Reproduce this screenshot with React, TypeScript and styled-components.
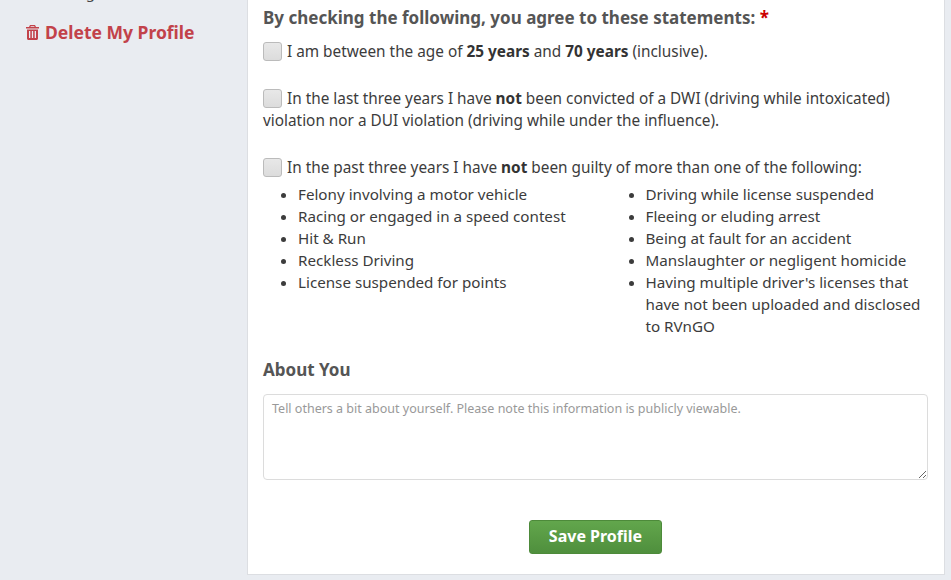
import { FC } from 'react';
import styled, { createGlobalStyle } from 'styled-components';

const GlobalStyle = createGlobalStyle`
	html, body {
		margin: 0;
		padding: 0;
		height: 580px;
		overflow: hidden;
		background-color: #e9ecf1;
		font-family: "Noto Sans", "Open Sans", "Liberation Sans", sans-serif;
		color: #333;
	}
`;

const leftItems = [
	'Felony involving a motor vehicle',
	'Racing or engaged in a speed contest',
	'Hit & Run',
	'Reckless Driving',
	'License suspended for points',
];

const rightItems = [
	'Driving while license suspended',
	'Fleeing or eluding arrest',
	'Being at fault for an accident',
	'Manslaughter or negligent homicide',
	"Having multiple driver's licenses that have not been uploaded and disclosed to RVnGO",
];

const TrashIcon: FC = () => (
	<svg width="13" height="15" viewBox="0 0 13 15" aria-hidden="true">
		<path
			fill="currentColor"
			fillRule="evenodd"
			d="M4 0h5l1 2h3v1.500H0V2h3zM4.800 1.200 4.400 2h4.200l-.4-.8zM1 4.500h11v9c0 .8-.7 1.500-1.500 1.500h-8C1.700 15 1 14.300 1 13.500zM3 6v7h1.300V6zM5.850 6v7h1.300V6zM8.700 6v7H10V6z"
		/>
	</svg>
);

const App: FC = () => (
	<>
		<GlobalStyle />
		<Page>
			<Sidebar>
				<SideLink>Settings</SideLink>
				<DeleteLink>
					<TrashIcon />
					Delete My Profile
				</DeleteLink>
			</Sidebar>
			<Panel>
				<Heading>
					By checking the following, you agree to these statements: <Required>*</Required>
				</Heading>
				<Statement>
					<Check /> I am between the age of <b>25 years</b> and <b>70 years</b> (inclusive).
				</Statement>
				<Statement>
					<Check /> In the last three years I have <b>not</b> been convicted of a DWI (driving while intoxicated) violation nor a DUI violation (driving while under the influence).
				</Statement>
				<Statement $tight>
					<Check /> In the past three years I have <b>not</b> been guilty of more than one of the following:
				</Statement>
				<Columns>
					<BulletList>
						{leftItems.map((item) => <li key={item}>{item}</li>)}
					</BulletList>
					<BulletList>
						{rightItems.map((item) => <li key={item}>{item}</li>)}
					</BulletList>
				</Columns>
				<SubHeading>About You</SubHeading>
				<AboutInput placeholder="Tell others a bit about yourself. Please note this information is publicly viewable." />
				<Actions>
					<SaveButton>Save Profile</SaveButton>
				</Actions>
			</Panel>
		</Page>
	</>
);

export default App;

const Page = styled.div`
	display: flex;
	align-items: flex-start;
	width: 951px;
	height: 580px;
	overflow: hidden;
`;

const Sidebar = styled.aside`
	width: 247px;
	flex-shrink: 0;
	display: flex;
	flex-direction: column;
	margin-top: -19px;
	padding-left: 26px;
	box-sizing: border-box;
`;

const SideLink = styled.div`
	padding-left: 19px;
	font-size: 15px;
	line-height: 22px;
	color: #444;
`;

const DeleteLink = styled.a`
	display: flex;
	align-items: center;
	gap: 6px;
	margin-top: 17px;
	font-size: 17.5px;
	line-height: 24px;
	font-weight: 700;
	color: #c2424a;
`;

const Panel = styled.main`
	width: 698px;
	height: 575px;
	box-sizing: border-box;
	padding: 7px 16px 0 15px;
	background-color: #fff;
	border: 1px solid #dcdee2;
	border-top: none;
	font-size: 15px;
	line-height: 22px;
	color: #3c3c3c;
`;

const Heading = styled.h3`
	margin: 0;
	font-size: 17px;
	line-height: 22px;
	font-weight: 700;
	color: #555;
`;

const Required = styled.span`
	color: #c00;
`;

const Statement = styled.p<{ $tight?: boolean }>`
	margin: 11px 0 ${(p) => (p.$tight ? '0' : '25px')};
	font-size: 15.35px;

	b {
		font-weight: 700;
		color: #333;
	}
`;

const Check = styled.span`
	display: inline-block;
	width: 17px;
	height: 17px;
	margin-right: 1px;
	vertical-align: -4px;
	border: 1px solid #bbb;
	border-radius: 3px;
	background: linear-gradient(#e8e8e8, #dcdcdc);
`;

const Columns = styled.div`
	display: grid;
	grid-template-columns: 347.5px 1fr;
	margin-top: 5px;
	font-size: 15.2px;
`;

const BulletList = styled.ul`
	margin: 0;
	padding: 0 0 0 35px;
`;

const SubHeading = styled.h4`
	margin: 21px 0 12px;
	font-size: 17px;
	line-height: 24px;
	font-weight: 700;
	color: #555;
`;

const AboutInput = styled.textarea`
	display: block;
	width: 100%;
	height: 86px;
	box-sizing: border-box;
	padding: 4px 8px;
	border: 1px solid #dcdcdc;
	border-radius: 4px;
	font-family: inherit;
	font-size: 12.5px;
	line-height: 20px;
	outline: none;

	&::placeholder {
		color: #999;
		opacity: 1;
	}
`;

const Actions = styled.div`
	display: flex;
	justify-content: center;
	margin-top: 40px;
`;

const SaveButton = styled.button`
	width: 133px;
	height: 34px;
	padding: 0 0 2px;
	border: 1px solid #4d8a3a;
	border-radius: 3px;
	background: linear-gradient(#62a64c, #4f8f3d);
	color: #fff;
	font-family: inherit;
	font-size: 16px;
	font-weight: 700;
`;
